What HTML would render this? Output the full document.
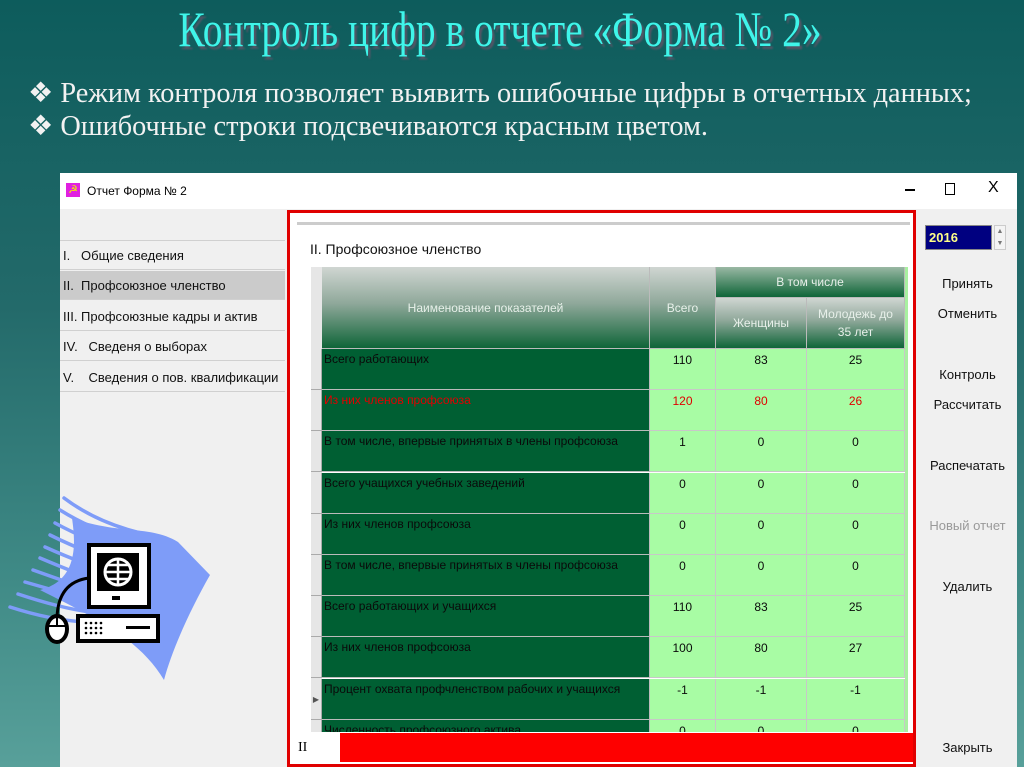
<!DOCTYPE html>
<html><head><meta charset="utf-8"><style>
*{margin:0;padding:0;box-sizing:border-box}
body{width:1024px;height:767px;overflow:hidden;position:relative;background:linear-gradient(180deg,#0d5c5c 0%,#236a6a 40%,#3f8a86 75%,#58a09a 100%);font-family:"Liberation Sans Narrow","Liberation Sans",sans-serif}
.abs{position:absolute}
.title{left:0;width:1000px;top:0px;text-align:center;font-family:"Liberation Serif",serif;font-size:50px;color:#3ff5ea;text-shadow:3px 3px 2px #556;transform:scaleX(.79);transform-origin:500px 0;white-space:nowrap}
.bul{left:28px;font-family:"Liberation Serif",serif;font-size:28px;color:#f2f2f2;white-space:nowrap;transform:scaleX(1.01);transform-origin:0 0}
.win{left:60px;top:173px;width:957px;height:594px;background:#f0f0f0}
.tb{left:0;top:0;width:957px;height:36px;background:#fff;font-size:12px}
.menu div{position:absolute;left:0;width:225px;height:29px;border-bottom:1px solid #d0d0d0;font-size:13px;line-height:29px;padding-left:3px;color:#111}
.red{left:227px;top:37px;width:629px;height:557px;border:3px solid #e00000;background:#fff}
.grid{position:absolute;font-size:12px}
.c{position:absolute;text-align:center;border-right:1px solid #bbb;border-bottom:1px solid #bbb}
.btn{position:absolute;left:860px;width:95px;text-align:center;font-size:13px;color:#111}
</style></head><body>
<div class="abs title">Контроль цифр в отчете «Форма № 2»</div>
<div class="abs bul" style="top:76px">❖ Режим контроля позволяет выявить ошибочные цифры в отчетных данных;</div>
<div class="abs bul" style="top:109px">❖ Ошибочные строки подсвечиваются красным цветом.</div>

<div class="abs win">
 <div class="abs tb">
  <div class="abs" style="left:6px;top:10px;width:14px;height:14px;background:#e020e0;color:#ee0;font-size:11px;line-height:14px;text-align:center">☭</div>
  <div class="abs" style="left:27px;top:11px">Отчет Форма № 2</div>
  <div class="abs" style="left:845px;top:16px;width:10px;height:1.5px;background:#000"></div>
  <div class="abs" style="left:885px;top:10px;width:10px;height:12px;border:1px solid #000"></div>
  <div class="abs" style="left:928px;top:6px;font-size:16px">X</div>
 </div>
 <div class="menu">
  <div style="top:37px;height:31px"></div>
  <div style="top:68px">I.&nbsp;&nbsp; Общие сведения</div>
  <div style="top:98px;background:#cbcbcb">II.&nbsp; Профсоюзное членство</div>
  <div style="top:129px">III. Профсоюзные кадры и актив</div>
  <div style="top:159px">IV.&nbsp;&nbsp; Сведеня о выборах</div>
  <div style="top:190px">V.&nbsp;&nbsp;&nbsp; Сведения о пов. квалификации</div>
 </div>
 <div class="abs red">
  <div class="abs" style="left:7px;top:9px;width:613px;height:3px;background:#ccc"></div>
  <div class="abs" style="left:20px;top:28px;font-size:14px;color:#111">II. Профсоюзное членство</div>
  <div class="grid" style="left:21px;top:54px;width:597px;height:465px;overflow:hidden">
   <div class="abs" style="left:0;top:0;width:11px;height:465px;background:#e6e6e6"></div>
   <div class="c" style="left:11px;top:0;width:328px;height:82px;line-height:82px;color:#e8f0ea;background:linear-gradient(#d0d6d2,#8fa89a 45%,#0f6538);">Наименование показателей</div>
   <div class="c" style="left:339px;top:0;width:66px;height:82px;line-height:82px;color:#e8f0ea;background:linear-gradient(#d0d6d2,#8fa89a 45%,#0f6538)">Всего</div>
   <div class="c" style="left:405px;top:0;width:189px;height:31px;line-height:31px;color:#e8f0ea;background:linear-gradient(#9ab8a4,#0f6538)">В том числе</div>
   <div class="c" style="left:405px;top:31px;width:91px;height:51px;line-height:51px;color:#e8f0ea;background:linear-gradient(#d0d6d2,#8fa89a 45%,#0f6538)">Женщины</div>
   <div class="c" style="left:496px;top:31px;width:98px;height:51px;padding-top:7px;line-height:18px;color:#e8f0ea;background:linear-gradient(#d0d6d2,#8fa89a 45%,#0f6538)">Молодежь до<br>35 лет</div>
   <div class="abs" style="left:594px;top:0;width:3px;height:465px;background:#a8f0a0"></div>
   <div id="rows"></div>
  </div>
  <div class="abs" style="left:0;top:520px;width:50px;height:30px;background:#fff;font-family:'Liberation Serif',serif;font-size:14px;line-height:30px;padding-left:8px">II</div>
  <div class="abs" style="left:50px;top:520px;width:573px;height:29px;background:#fe0000"></div>
 </div>
 <div class="abs" style="left:865px;top:52px;width:67px;height:25px;background:#000080;border:1px solid #888;color:#ff8;font-size:13px;font-weight:bold;line-height:23px;padding-left:3px">2016</div>
 <div class="abs" style="left:934px;top:52px;width:12px;height:25px;border:1px solid #ccc;background:#f4f4f4;font-size:7px;color:#777;text-align:center;line-height:12px">▲<br>▼</div>
 <div class="btn" style="top:103px">Принять</div>
 <div class="btn" style="top:133px">Отменить</div>
 <div class="btn" style="top:194px">Контроль</div>
 <div class="btn" style="top:224px">Рассчитать</div>
 <div class="btn" style="top:285px">Распечатать</div>
 <div class="btn" style="top:345px;color:#999">Новый отчет</div>
 <div class="btn" style="top:406px">Удалить</div>
 <div class="btn" style="top:567px">Закрыть</div>
</div>
<svg class="abs" style="left:0;top:480px" width="230" height="220" viewBox="0 0 230 220">
 <path d="M72 38 C120 55 150 45 178 62 L210 95 C190 130 172 170 164 200 C140 160 100 140 40 110 C80 100 75 60 72 38 Z" fill="#7e9cf8"/>
 <g stroke="#7e9cf8" stroke-width="3.5" fill="none" stroke-linecap="round">
  <path d="M64 18 Q100 45 150 55"/><path d="M60 30 Q100 55 150 65"/><path d="M55 43 Q95 65 140 75"/>
  <path d="M50 55 Q90 75 130 85"/><path d="M45 67 Q85 85 120 95"/><path d="M40 78 Q80 95 110 105"/>
  <path d="M33 90 Q75 105 100 113"/><path d="M25 102 Q70 115 95 122"/><path d="M18 114 Q60 128 90 132"/>
  <path d="M10 127 Q50 140 85 142"/>
 </g>
 <rect x="89" y="65" width="60" height="62" fill="#fff" stroke="#000" stroke-width="4"/>
 <rect x="97" y="73" width="42" height="38" fill="#000"/>
 <circle cx="118" cy="92" r="13" fill="none" stroke="#fff" stroke-width="3"/>
 <path d="M118 79V105M105 92H131M108 85H128M108 99H128" stroke="#fff" stroke-width="2.5"/>
 <rect x="112" y="116" width="8" height="4" fill="#000"/>
 <rect x="78" y="136" width="80" height="25" fill="#fff" stroke="#000" stroke-width="4"/>
 <g fill="#000"><circle cx="86" cy="143" r="1.3"/><circle cx="91" cy="143" r="1.3"/><circle cx="96" cy="143" r="1.3"/><circle cx="101" cy="143" r="1.3"/><circle cx="86" cy="148" r="1.3"/><circle cx="91" cy="148" r="1.3"/><circle cx="96" cy="148" r="1.3"/><circle cx="101" cy="148" r="1.3"/><circle cx="86" cy="153" r="1.3"/><circle cx="91" cy="153" r="1.3"/><circle cx="96" cy="153" r="1.3"/><circle cx="101" cy="153" r="1.3"/></g>
 <rect x="126" y="146" width="24" height="3" fill="#000"/>
 <path d="M89 98 Q58 102 57 138" stroke="#000" stroke-width="3" fill="none"/>
 <ellipse cx="57" cy="149" rx="10" ry="13" fill="#fff" stroke="#000" stroke-width="4"/>
 <path d="M47 146H67M57 136V146" stroke="#000" stroke-width="2"/>
</svg>
<script>
var d=[["Всего работающих",110,83,25],["Из них членов профсоюза",120,80,26,1],["В том числе, впервые принятых в члены профсоюза",1,0,0],["Всего учащихся учебных заведений",0,0,0],["Из них членов профсоюза",0,0,0],["В том числе, впервые принятых в члены профсоюза",0,0,0],["Всего работающих и учащихся",110,83,25],["Из них членов профсоюза",100,80,27],["Процент охвата профчленством рабочих и учащихся",-1,-1,-1],["Численность профсоюзного актива",0,0,0]];
var h="";d.forEach(function(r,i){var t=82+i*41.2,col=r[4]?"#e00000":"#0a0a0a";
h+='<div class="c" style="left:0;top:'+t+'px;width:11px;height:41px;background:#e6e6e6;border-color:#aaa;font-size:8px;color:#555;line-height:41px">'+(i==8?"▶":"")+'</div>';
h+='<div class="c" style="left:11px;top:'+t+'px;width:328px;height:41px;background:#005f33;color:'+col+';text-align:left;padding:3px 2px">'+r[0]+'</div>';
[[339,66],[405,91],[496,98]].forEach(function(c,j){h+='<div class="c" style="left:'+c[0]+'px;top:'+t+'px;width:'+c[1]+'px;height:41px;background:#a8fca4;border-color:#c8c8c8;color:'+col+';padding-top:4px">'+r[j+1]+'</div>';});});
document.getElementById("rows").outerHTML=h;
</script>
</body></html>
